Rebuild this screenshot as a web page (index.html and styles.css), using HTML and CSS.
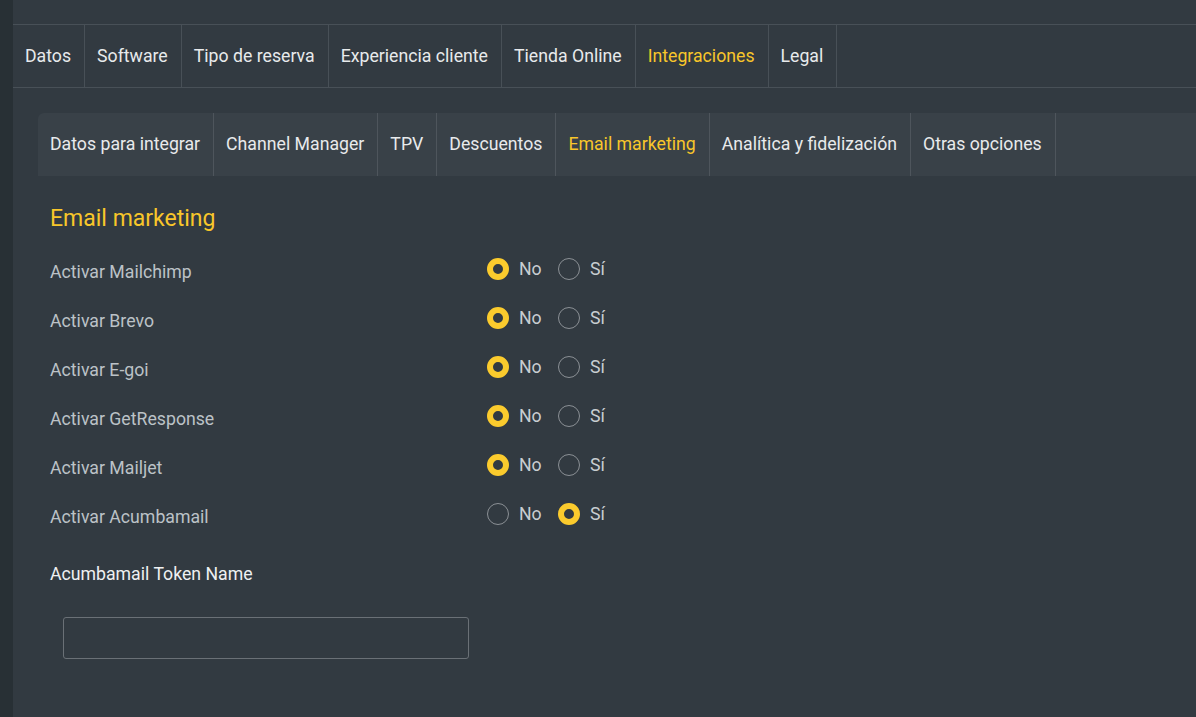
FILE: index.html
```html
<!DOCTYPE html>
<html lang="es">
<head>
<meta charset="utf-8">
<link rel="stylesheet" href="styles.css">
</head>
<body>
<div class="app">
  <aside class="rail"></aside>
  <main class="main">
    <div class="topgap"></div>
    <nav class="tabs">
      <a class="tab">Datos</a>
      <a class="tab">Software</a>
      <a class="tab">Tipo de reserva</a>
      <a class="tab">Experiencia cliente</a>
      <a class="tab">Tienda Online</a>
      <a class="tab active">Integraciones</a>
      <a class="tab">Legal</a>
    </nav>
    <section class="content">
      <nav class="subtabs">
        <a class="subtab">Datos para integrar</a>
        <a class="subtab">Channel Manager</a>
        <a class="subtab">TPV</a>
        <a class="subtab">Descuentos</a>
        <a class="subtab active">Email marketing</a>
        <a class="subtab">Analítica y fidelización</a>
        <a class="subtab">Otras opciones</a>
      </nav>
      <div class="form">
        <h2 class="title">Email marketing</h2>
        <div class="row">
          <span class="label">Activar Mailchimp</span>
          <div class="opts">
            <label class="opt"><span class="radio on"></span>No</label>
            <label class="opt"><span class="radio"></span>Sí</label>
          </div>
        </div>
        <div class="row">
          <span class="label">Activar Brevo</span>
          <div class="opts">
            <label class="opt"><span class="radio on"></span>No</label>
            <label class="opt"><span class="radio"></span>Sí</label>
          </div>
        </div>
        <div class="row">
          <span class="label">Activar E-goi</span>
          <div class="opts">
            <label class="opt"><span class="radio on"></span>No</label>
            <label class="opt"><span class="radio"></span>Sí</label>
          </div>
        </div>
        <div class="row">
          <span class="label">Activar GetResponse</span>
          <div class="opts">
            <label class="opt"><span class="radio on"></span>No</label>
            <label class="opt"><span class="radio"></span>Sí</label>
          </div>
        </div>
        <div class="row">
          <span class="label">Activar Mailjet</span>
          <div class="opts">
            <label class="opt"><span class="radio on"></span>No</label>
            <label class="opt"><span class="radio"></span>Sí</label>
          </div>
        </div>
        <div class="row">
          <span class="label">Activar Acumbamail</span>
          <div class="opts">
            <label class="opt"><span class="radio"></span>No</label>
            <label class="opt"><span class="radio on"></span>Sí</label>
          </div>
        </div>
        <div class="field">
          <div class="field-label">Acumbamail Token Name</div>
          <input class="input" type="text">
        </div>
      </div>
    </section>
  </main>
</div>
</body>
</html>
```
FILE: styles.css
```css
* { box-sizing: border-box; }
html, body { margin: 0; padding: 0; }
body {
  background: #323a41;
  font-family: Roboto, "Liberation Sans", sans-serif;
  font-size: 17.7px;
  color: #e6e8ea;
  width: 1196px;
  height: 717px;
  overflow: hidden;
}
.app { display: flex; height: 717px; }
.rail { width: 13px; flex: none; background: #283035; }
.main { flex: 1; display: flex; flex-direction: column; }
.topgap { height: 24px; }
.tabs {
  display: flex;
  height: 64px;
  border-top: 1px solid #485057;
  border-bottom: 1px solid #485057;
}
.tab {
  display: flex;
  align-items: center;
  padding: 0 13px 0 12px;
  border-right: 1px solid #485057;
  color: #e8eaec;
  white-space: nowrap;
}
.tab.active { color: #f8c62a; }
.content { padding: 25px 0 0 25px; }
.subtabs {
  display: flex;
  height: 63px;
  background: #394148;
  border-radius: 6px 0 0 0;
}
.subtab {
  display: flex;
  align-items: center;
  padding: 0 13px 2px 12px;
  border-right: 1px solid #4e555c;
  color: #e8eaec;
  white-space: nowrap;
}
.subtab.active { color: #f8c62a; }
.form { padding: 30px 0 0 12px; }
.title {
  margin: 0 0 12px 0;
  font-weight: 400;
  font-size: 23px;
  color: #f8c62a;
  line-height: 26px;
}
.row {
  display: flex;
  align-items: center;
  height: 49px;
}
.label { width: 437px; color: #bcc2c7; }
.row .label { padding-top: 6px; }
.opts { display: flex; gap: 11px; }
.opt { display: flex; align-items: center; gap: 10px; color: #c9cdd1; }
.opt:first-child { width: 60px; }
.radio {
  width: 22px;
  height: 22px;
  border-radius: 50%;
  border: 1.5px solid #8b9095;
  display: inline-block;
}
.radio.on {
  border: 6px solid #fbcb2d;
  background: #323a41;
}
.field { padding-top: 26px; }
.field-label { color: #eef0f2; margin-bottom: 33px; }
.input {
  display: block;
  margin-left: 13px;
  width: 406px;
  height: 42px;
  background: transparent;
  border: 1px solid #6a7076;
  border-radius: 3px;
}
```
